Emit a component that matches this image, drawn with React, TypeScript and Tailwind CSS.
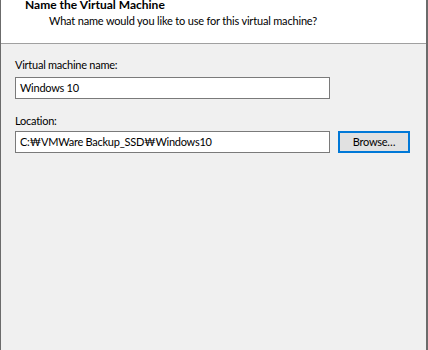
export default function App() {
  const font = { fontFamily: 'Lato, "Noto Sans CJK KR", sans-serif' }
  return (
    <div
      className="flex flex-col w-[428px] h-[350px] overflow-hidden bg-[#f0f0f0] border-l border-r-2 border-[#6b6b6b] text-[11px] leading-[16px] tracking-[-0.25px] text-black"
      style={font}
    >
      {/* header */}
      <div className="flex flex-col h-[44px] shrink-0 bg-white border-b border-[#a0a0a0]">
        <div className="pl-[24px] -mt-[3px] text-[12px] tracking-normal font-bold">Name the Virtual Machine</div>
        <div className="pl-[48px] tracking-[-0.18px]">What name would you like to use for this virtual machine?</div>
      </div>

      {/* body */}
      <div className="flex flex-col pl-[14px] pt-[13px]">
        <span>Virtual machine name:</span>
        <div className="flex items-center mt-[4px] w-[315px] h-[22px] px-[4px] bg-white border border-[#7a7a7a]">
          Windows 10
        </div>

        <span className="mt-[14px]">Location:</span>
        <div className="flex items-center gap-[8px] mt-[2px]">
          <div className="flex items-center w-[315px] h-[22px] px-[4px] bg-white border border-[#7a7a7a]">
            C:₩VMWare Backup_SSD₩Windows10
          </div>
          <button className="flex items-center justify-center w-[72px] h-[22px] bg-[#e1e1e1] border-2 border-[#0078d7]">
            Browse…
          </button>
        </div>
      </div>
    </div>
  )
}
